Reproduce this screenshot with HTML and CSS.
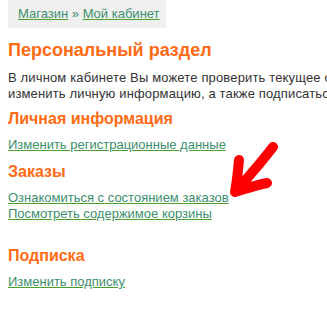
FILE: index.html
```html
<!DOCTYPE html>
<html lang="ru">
<head>
<meta charset="utf-8">
<link rel="stylesheet" href="styles.css">
</head>
<body>
<div class="crumbs"><a href="#">Магазин</a> <span class="sep">»</span> <a href="#">Мой кабинет</a></div>
<h1 class="title">Персональный раздел</h1>
<p class="intro">В личном кабинете Вы можете проверить текущее состояние корзины, ход выполнения заказов, просмотреть или<br>изменить личную информацию, а также подписаться на новости и другие информационные рассылки.</p>
<h2 class="sub">Личная информация</h2>
<a class="link" href="#">Изменить регистрационные данные</a>
<h2 class="sub orders">Заказы</h2>
<a class="link" href="#">Ознакомиться с состоянием заказов</a>
<a class="link" href="#">Посмотреть содержимое корзины</a>
<h2 class="sub subscr">Подписка</h2>
<a class="link" href="#">Изменить подписку</a>
<svg class="arrow" width="60" height="70" viewBox="0 0 60 70">
  <path d="M43 7 C 33 20, 22 33, 6 51 M9 20 C 8 30, 7 42, 5 52 C 15 49, 26 45, 37 43" fill="none" stroke="#ff0000" stroke-width="10" stroke-linecap="round" stroke-linejoin="round"/>
</svg>
</body>
</html>
```
FILE: styles.css
```css
html, body { margin: 0; padding: 0; background: #fff; }
body {
  padding: 0 8px;
  font-family: "Liberation Sans", Arial, sans-serif;
  font-size: 13px;
  color: #333;
  overflow: hidden;
  width: 319px;
  height: 327px;
  position: relative;
}
a { color: #3c8f6c; text-decoration: underline; text-decoration-color: #4aa22c; }
.crumbs {
  display: inline-block;
  background: #f0f0f0;
  padding: 6px 6px 6px 10px;
  font-size: 13px;
  line-height: 16px;
}
.sep { color: #3c8f6c; }
.title {
  margin: 11px 0 0;
  font-size: 18px;
  line-height: 22px;
  color: #ff6a13;
}
.intro {
  margin: 9px 0 0;
  line-height: 16px;
  white-space: nowrap;
  letter-spacing: 0.15px;
}
.sub {
  margin: 7px 0 0;
  font-size: 16px;
  line-height: 20px;
  color: #ff6a13;
}
.sub.orders { margin-top: 9px; }
.sub.subscr { margin-top: 24px; }
.link { display: block; line-height: 16px; }
.sub + .link { margin-top: 8px; }
.arrow { position: absolute; left: 230px; top: 140px; }
```
